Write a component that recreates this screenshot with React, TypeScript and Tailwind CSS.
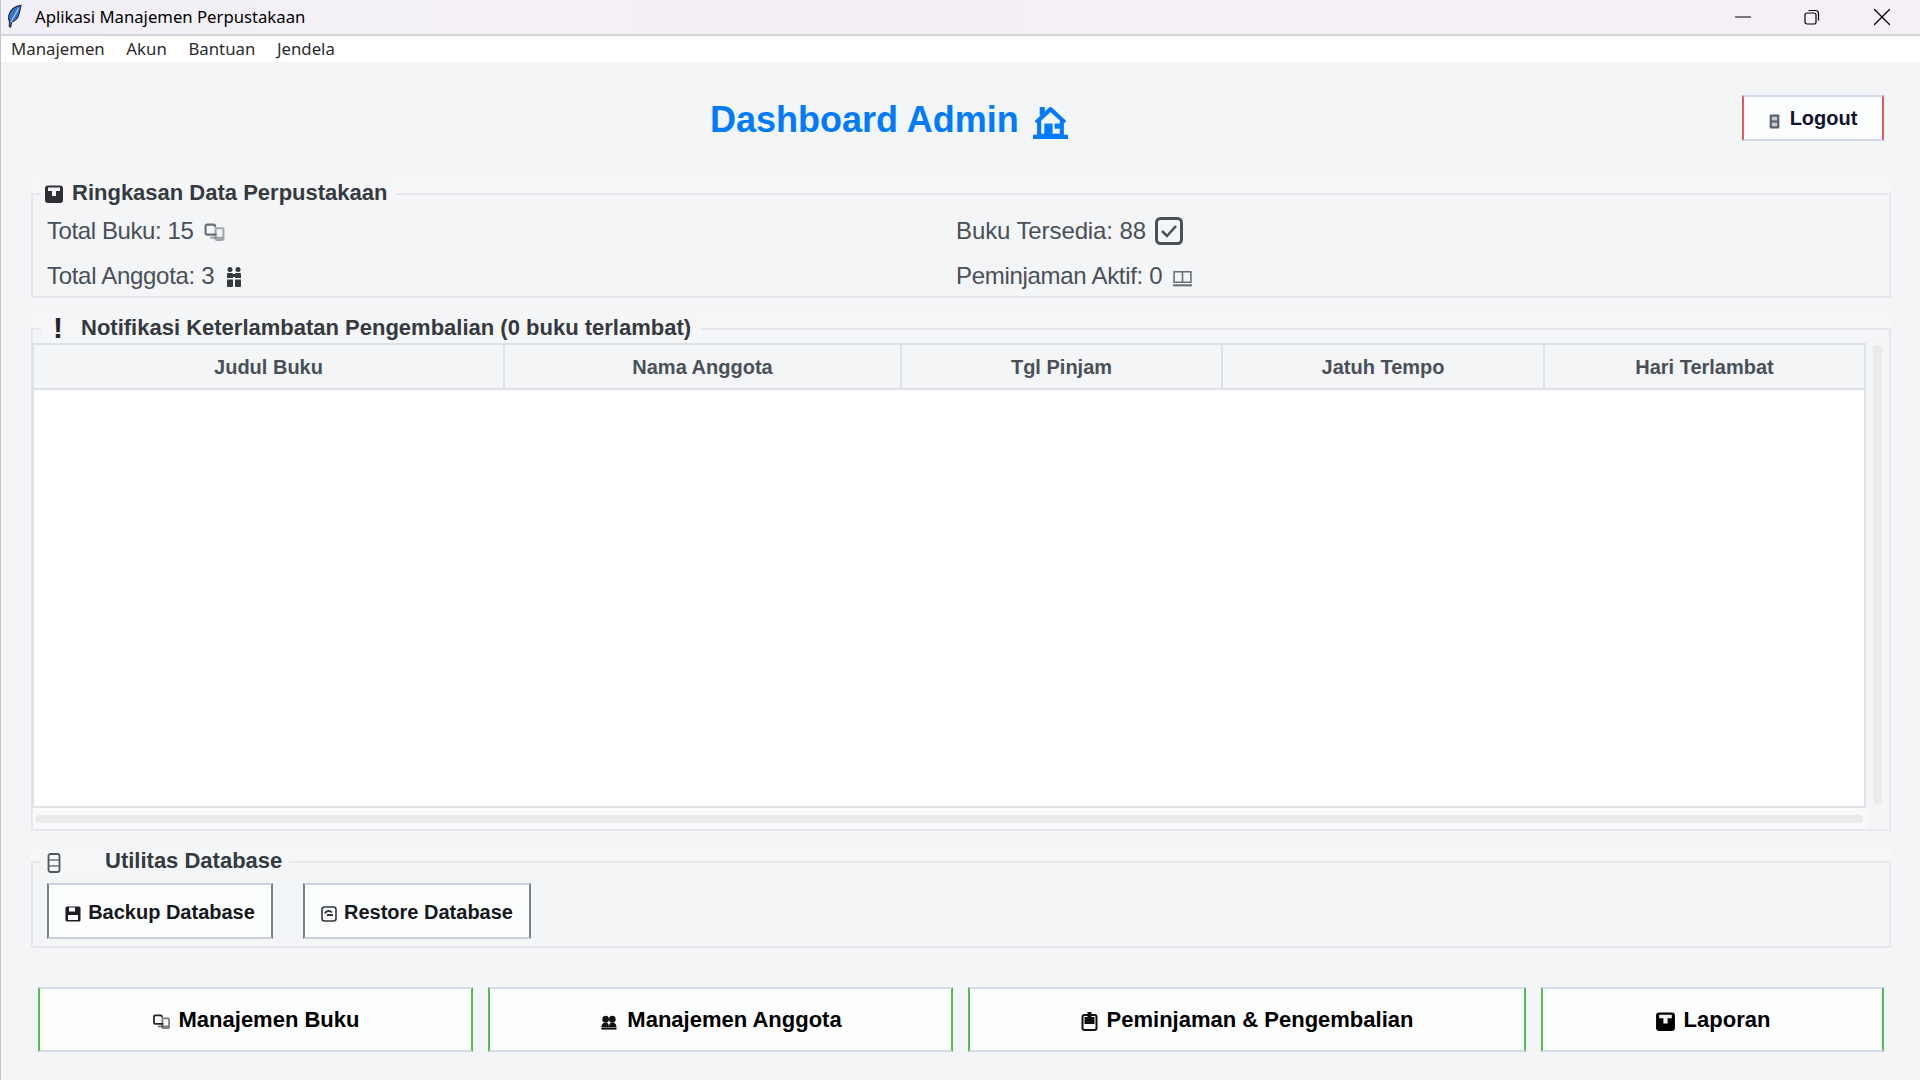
import React from "react";
import { Minus, X } from "lucide-react";

type IconProps = { className?: string };

function Feather({ className }: IconProps) {
  return (
    <svg viewBox="0 0 16 24" className={className}>
      <path d="M15 .5C9 1 3.500 5 2 11c-.7 3-.3 5 .7 7L2.500 23.500l1.500.2.8-5c4-1.200 7-4.700 8.300-9.700.6-3 1.300-5.800 1.900-8.500z" fill="#3a76c8" stroke="#1d2840" strokeWidth="1.200" />
      <path d="M12.500 3.500 4 19" stroke="#a9c9f2" strokeWidth="1.200" />
    </svg>
  );
}

function House({ className }: IconProps) {
  return (
    <svg viewBox="0 0 34 33" className={className} fill="none" stroke="#007bff" strokeWidth="4">
      <path d="M3 17 17 4l14 13" strokeLinejoin="round" />
      <path d="M9 2v8" strokeWidth="5" />
      <path d="M6 15v15h22V15" />
      <path d="M0 31h34" />
      <rect x="11" y="18" width="8" height="12" fill="#007bff" stroke="none" />
      <rect x="21" y="18" width="6" height="5" fill="#007bff" stroke="none" />
    </svg>
  );
}

function Box({ className }: IconProps) {
  return (
    <svg viewBox="0 0 20 20" className={className}>
      <rect x="1" y="1.500" width="18" height="17.500" rx="3" fill="currentColor" />
      <path d="M4 3.500h12v3.500h-4v5H8V7H4z" fill="#f4f5f7" />
    </svg>
  );
}

function Books({ className }: IconProps) {
  return (
    <svg viewBox="0 0 20 18" className={className} fill="none" stroke="currentColor" strokeWidth="2">
      <path d="M12 11H3a1.500 1.500 0 0 1-1.500-1.500V3A1.500 1.500 0 0 1 3 1.500h6A1.500 1.500 0 0 1 10.500 3v1" />
      <rect x="11" y="5" width="7.500" height="11" rx="1" opacity="0.6" />
      <path d="M6 14h12" opacity="0.6" />
    </svg>
  );
}

function People({ className }: IconProps) {
  return (
    <svg viewBox="0 0 20 18" className={className} fill="currentColor">
      <circle cx="6" cy="5" r="4" />
      <circle cx="14" cy="5" r="4" />
      <path d="M1 15c0-5 3-6 5-6s4 1 4 6zM10 15c0-5 2-6 4-6s5 1 5 6z" />
      <rect x="1" y="15.500" width="18" height="2" />
    </svg>
  );
}

function Pair({ className }: IconProps) {
  return (
    <svg viewBox="0 0 16 20" className={className} fill="currentColor">
      <circle cx="4" cy="2.500" r="2.500" />
      <circle cx="12" cy="2.500" r="2.500" />
      <rect x="1" y="6" width="6" height="14" rx="1" />
      <rect x="9" y="6" width="6" height="14" rx="1" />
      <rect x="7" y="7" width="2" height="3" />
      <rect x="1" y="11" width="14" height="1.500" fill="#f4f5f7" />
    </svg>
  );
}

function CheckBox({ className }: IconProps) {
  return (
    <svg viewBox="0 0 28 28" className={className} fill="none" stroke="currentColor">
      <rect x="1.500" y="1.500" width="25" height="25" rx="4" strokeWidth="3" />
      <path d="M7 14l5 5 9-10" strokeWidth="2.500" />
    </svg>
  );
}

function OpenBook({ className }: IconProps) {
  return (
    <svg viewBox="0 0 20 16" className={className} fill="none" stroke="currentColor" strokeWidth="1.500">
      <path d="M2 1.500h7.500a.5.5 0 0 1 .5.500v9.500H2zM18 1.500h-7.500a.5.5 0 0 0-.5.500v9.500h8z" />
      <path d="M1 14.500h18" strokeWidth="2" />
    </svg>
  );
}

function Cabinet({ className }: IconProps) {
  return (
    <svg viewBox="0 0 14 20" className={className} fill="none" stroke="currentColor" strokeWidth="1.800">
      <rect x="1.500" y="1" width="11" height="18" rx="2" />
      <path d="M2 7h10M2 13h10" opacity="0.6" />
    </svg>
  );
}

function Floppy({ className }: IconProps) {
  return (
    <svg viewBox="0 0 16 16" className={className}>
      <rect x="0.500" y="0.500" width="15" height="15" rx="1.500" fill="currentColor" />
      <rect x="4" y="1.500" width="6" height="4" fill="#fff" />
      <rect x="3" y="9" width="10" height="5" fill="#fff" />
    </svg>
  );
}

function Restore({ className }: IconProps) {
  return (
    <svg viewBox="0 0 16 16" className={className} fill="none" stroke="currentColor">
      <rect x="1" y="1" width="14" height="14" rx="2.500" strokeWidth="1.600" />
      <path d="M4 7.500C5 4.500 9 4 11 6.500M12 9H6" strokeWidth="2" />
    </svg>
  );
}

function Clipboard({ className }: IconProps) {
  return (
    <svg viewBox="0 0 16 20" className={className}>
      <rect x="1" y="4" width="14" height="15" rx="2" fill="none" stroke="currentColor" strokeWidth="2" />
      <rect x="6" y="1" width="4" height="6" fill="currentColor" />
      <rect x="3" y="6" width="10" height="7" fill="currentColor" />
    </svg>
  );
}

function Door({ className }: IconProps) {
  return (
    <svg viewBox="0 0 10 14" className={className}>
      <rect x="0.500" y="0.500" width="9" height="13" rx="1" fill="#5b5f68" />
      <rect x="2.500" y="2.500" width="5" height="3.500" fill="#c7ccd8" />
      <rect x="2.500" y="8" width="5" height="3.500" fill="#c7ccd8" />
    </svg>
  );
}

function GroupBox({
  title,
  icon,
  titleClass,
  boxClass,
  children,
}: {
  title: string;
  icon: React.ReactNode;
  titleClass: string;
  boxClass: string;
  children: React.ReactNode;
}) {
  return (
    <div className="relative">
      <div className="h-[15px] bg-[#f6f7f7]" />
      <div className={`border-2 border-[#e6e8eb] ${boxClass}`}>{children}</div>
      <div className={`absolute top-0 left-[10px] h-[29px] flex items-center bg-[#f5f6f7] text-[#343a40] ${titleClass}`}>
        {icon}
        <span className="text-[22px] font-bold whitespace-nowrap">{title}</span>
      </div>
    </div>
  );
}

function StatRow({ label, icon, className }: { label: string; icon: React.ReactNode; className: string }) {
  return (
    <div className={`flex items-center text-[24px] text-[#495057] whitespace-nowrap ${className}`}>
      <span>{label}</span>
      {icon}
    </div>
  );
}

function BottomButton({ icon, label, className }: { icon: React.ReactNode; label: string; className: string }) {
  return (
    <button className={`h-[65px] flex items-center justify-center bg-[#fcfdfd] border-y-2 border-y-[#d5dbe8] border-x-2 border-x-[#5cb85c] text-[22px] font-bold text-black ${className}`}>
      {icon}
      <span>{label}</span>
    </button>
  );
}

function DbButton({ icon, label, className }: { icon: React.ReactNode; label: string; className: string }) {
  return (
    <button className={`h-[56px] flex items-center justify-center bg-[#fcfdfd] border-y-2 border-y-[#c9cfdc] border-x-2 border-x-[#7b8290] text-[20px] font-bold text-[#15181c] ${className}`}>
      {icon}
      <span className="pt-[1px]">{label}</span>
    </button>
  );
}

const columns = [
  { name: "Judul Buku", width: "w-[471px]" },
  { name: "Nama Anggota", width: "w-[397px]" },
  { name: "Tgl Pinjam", width: "w-[321px]" },
  { name: "Jatuh Tempo", width: "w-[322px]" },
  { name: "Hari Terlambat", width: "w-[319px]" },
];

export default function App() {
  return (
    <div className="w-[1920px] h-[1080px] overflow-hidden flex flex-col bg-[#f4f5f7] border-l border-l-[#c4c6ca] font-['Liberation_Sans',Arial,sans-serif]">
      <div className="h-[36px] shrink-0 flex items-center border-b-2 border-b-[#d6d4d8] bg-gradient-to-r from-[#f2f0f6] to-[#f7eff6] font-['Noto_Sans',sans-serif]">
        <Feather className="w-[15px] h-[24px] ml-[6px] -mt-[2px]" />
        <span className="ml-[13px] text-[16.700px] text-black whitespace-nowrap">Aplikasi Manajemen Perpustakaan</span>
        <div className="ml-auto flex items-center text-black">
          <Minus className="w-[26px] h-[26px]" strokeWidth={1} />
          <svg viewBox="0 0 16 16" className="w-[16px] h-[16px] ml-[48px]" fill="none" stroke="currentColor" strokeWidth="1.200">
            <rect x="1" y="4" width="11" height="11" rx="2" />
            <path d="M4.500 1.500h7a3 3 0 0 1 3 3v7" />
          </svg>
          <X className="w-[30px] h-[30px] ml-[47px] mr-[23px]" strokeWidth={1} />
        </div>
      </div>

      <div className="h-[26px] shrink-0 flex items-center gap-[21.600px] pl-[10px] bg-white text-[16.800px] text-[#2c2c30] font-['Noto_Sans',sans-serif]">
        <span>Manajemen</span>
        <span>Akun</span>
        <span>Bantuan</span>
        <span>Jendela</span>
      </div>

      <div className="flex-1 pl-[30px] pr-[29px] flex flex-col">
        <div className="h-[116px] shrink-0 flex items-start">
          <div className="ml-[679px] mt-[35px] flex items-center">
            <span className="text-[36px] leading-[46px] font-bold text-[#007bff] whitespace-nowrap">Dashboard Admin</span>
            <House className="w-[35px] h-[34px] ml-[14px] mt-[4px]" />
          </div>
          <button className="ml-auto mr-[7px] mt-[33px] w-[142px] h-[46px] flex items-center justify-center bg-[#fcfdfe] border-y-2 border-y-[#d5d8e8] border-x-2 border-x-[#e05a66] text-[20px] font-bold text-[#12132e]">
            <Door className="w-[11px] h-[15px] mt-[6px] mr-[10px]" />
            <span>Logout</span>
          </button>
        </div>

        <GroupBox
          title="Ringkasan Data Perpustakaan"
          titleClass="w-[356px] pl-[3px]"
          boxClass="h-[105px] px-[14px]"
          icon={<Box className="w-[20px] h-[20px] mr-[8px] mt-[3px] text-[#2f3033]" />}
        >
          <div className="grid grid-cols-[909px_1fr] gap-y-[9px] pt-[18px]">
            <StatRow
              label="Total Buku: 15"
              className="tracking-[-0.4px]"
              icon={<Books className="w-[21px] h-[19px] ml-[10px] mt-[3px] text-[#6a6f76]" />}
            />
            <StatRow
              label="Buku Tersedia: 88"
              className="tracking-[-0.1px]"
              icon={<CheckBox className="w-[28px] h-[28px] ml-[9px] text-[#495057]" />}
            />
            <StatRow
              label="Total Anggota: 3"
              className="tracking-[-0.3px]"
              icon={<Pair className="w-[16px] h-[20px] ml-[12px] mt-[2px] text-[#343a40]" />}
            />
            <StatRow
              label="Peminjaman Aktif: 0"
              className="tracking-[-0.3px]"
              icon={<OpenBook className="w-[21px] h-[17px] ml-[10px] mt-[5px] text-[#6a6f76]" />}
            />
          </div>
        </GroupBox>

        <div className="mt-[15px]">
          <GroupBox
            title="Notifikasi Keterlambatan Pengembalian (0 buku terlambat)"
            titleClass="w-[660px] pl-[8px]"
            boxClass="h-[503px]"
            icon={<span className="w-[32px] text-[30px] leading-[30px] font-bold text-[#23272b] shrink-0 pl-[4px]">!</span>}
          >
            <div className="flex h-[465px] mt-[13px] -ml-[1px]">
              <div className="w-[1834px] h-[465px] flex flex-col border-2 border-[#dee2e6] bg-white">
                <div className="h-[45px] flex bg-[#f3f5f7] border-b-2 border-b-[#dee2e6]">
                  {columns.map((col) => (
                    <div
                      key={col.name}
                      className={`${col.width} flex items-center justify-center border-r-2 border-r-[#dee2e6] last:border-r-0 text-[20px] font-bold text-[#495057]`}
                    >
                      {col.name}
                    </div>
                  ))}
                </div>
              </div>
              <div className="ml-[7px] mt-[2px] w-[9px] h-[459px] rounded-full bg-[#e9eaec]" />
            </div>
            <div className="w-[1834px] h-[21px] pt-[7px] pl-[2px] bg-[#f8f9fa]">
              <div className="w-[1828px] h-[8px] rounded-full bg-[#e9eaec]" />
            </div>
          </GroupBox>
        </div>

        <div className="mt-[15px]">
          <GroupBox
            title="Utilitas Database"
            titleClass="w-[248px] pl-[6px]"
            boxClass="h-[87px] flex items-start pt-[20px] pl-[14px] gap-[30px]"
            icon={<Cabinet className="w-[14px] h-[20px] mr-[44px] mt-[5px] text-[#51565c]" />}
          >
            <DbButton
              label="Backup Database"
              className="w-[226px]"
              icon={<Floppy className="w-[16px] h-[16px] mr-[7px] mt-[6px] text-[#1c1d22]" />}
            />
            <DbButton
              label="Restore Database"
              className="w-[228px]"
              icon={<Restore className="w-[16px] h-[16px] mr-[7px] mt-[6px] text-[#33363c]" />}
            />
          </GroupBox>
        </div>

        <div className="mt-[39px] ml-[7px] flex gap-[15px]">
          <BottomButton
            label="Manajemen Buku"
            className="w-[435px]"
            icon={<Books className="w-[19px] h-[16px] mr-[8px] mt-[5px] text-[#25272b]" />}
          />
          <BottomButton
            label="Manajemen Anggota"
            className="w-[465px]"
            icon={<People className="w-[20px] h-[15px] mr-[8px] mt-[6px] text-[#111]" />}
          />
          <BottomButton
            label="Peminjaman & Pengembalian"
            className="w-[558px]"
            icon={<Clipboard className="w-[17px] h-[20px] mr-[9px] mt-[3px] text-[#111]" />}
          />
          <BottomButton
            label="Laporan"
            className="w-[343px]"
            icon={<Box className="w-[21px] h-[21px] mr-[8px] mt-[3px] text-black" />}
          />
        </div>
      </div>
    </div>
  );
}
